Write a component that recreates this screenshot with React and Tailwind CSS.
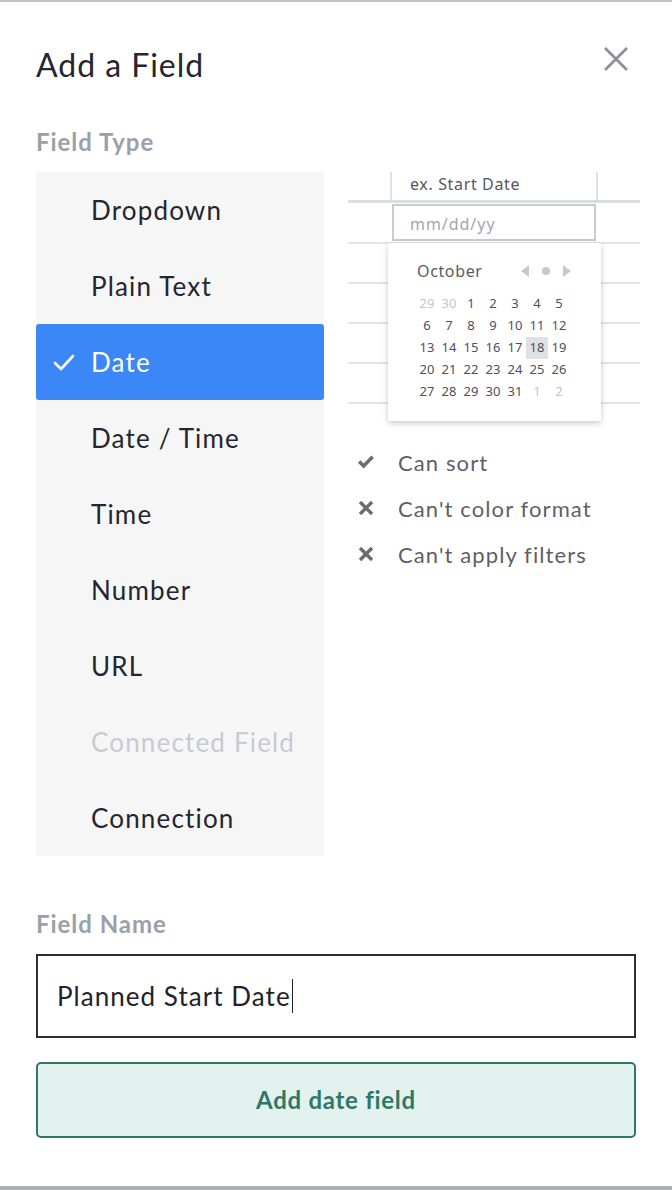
import React from 'react';

const FIELD_TYPES = [
  { label: 'Dropdown' },
  { label: 'Plain Text' },
  { label: 'Date', selected: true },
  { label: 'Date / Time' },
  { label: 'Time' },
  { label: 'Number' },
  { label: 'URL' },
  { label: 'Connected Field', disabled: true },
  { label: 'Connection' },
];

const WEEKS = [
  [29, 30, 1, 2, 3, 4, 5],
  [6, 7, 8, 9, 10, 11, 12],
  [13, 14, 15, 16, 17, 18, 19],
  [20, 21, 22, 23, 24, 25, 26],
  [27, 28, 29, 30, 31, 1, 2],
];

const ABILITIES = [
  { ok: true, text: 'Can sort' },
  { ok: false, text: "Can't color format" },
  { ok: false, text: "Can't apply filters" },
];

function CheckIcon({ className, strokeWidth = '2.6' }) {
  return (
    <svg viewBox="0 0 24 24" className={className} fill="none" stroke="currentColor" strokeWidth={strokeWidth} strokeLinecap="round" strokeLinejoin="round">
      <polyline points="3,13 9,19 21,6" />
    </svg>
  );
}

function HeavyCheck({ className }) {
  return (
    <svg viewBox="0 0 20 20" className={className} fill="currentColor">
      <path d="M1 10.8 L3.8 8.1 L7.4 11.6 L16 2.8 L18.8 5.5 L7.4 17.2 Z" />
    </svg>
  );
}

function CrossIcon({ className }) {
  return (
    <svg viewBox="0 0 24 24" className={className} fill="none" stroke="currentColor" strokeWidth="4.4" strokeLinecap="butt">
      <line x1="4" y1="4" x2="20" y2="20" />
      <line x1="20" y1="4" x2="4" y2="20" />
    </svg>
  );
}

// Little date-picker mock shown beside the type list
function DatePreview() {
  return (
    <div className="relative h-[268px] font-['Noto_Sans',sans-serif]">
      {/* header row */}
      <div className="flex h-[28px]">
        <div className="w-[44px] border-r-2 border-[#e1e2e6]" />
        <div className="w-[206px] border-r-2 border-[#e1e2e6] pl-[18px] text-[16px] leading-[24px] text-[#55565e] tracking-[0.04em]">
          ex. Start Date
        </div>
        <div className="flex-1" />
      </div>
      <div className="h-[3px] bg-[#dcdde2]" />
      <div className="h-[41px] border-b-2 border-[#e3e4e8] pt-[1px]">
        <div className="ml-[44px] w-[204px] h-[37px] border-2 border-[#c9cbd2] pl-[16px] pt-[2px] text-[16px] leading-[33px] text-[#a3a6ae] tracking-[0.06em]">
          mm/dd/yy
        </div>
      </div>
      <div className="h-[40px] border-b-2 border-[#e3e4e8]" />
      <div className="h-[40px] border-b-2 border-[#e3e4e8]" />
      <div className="h-[40px] border-b-2 border-[#e3e4e8]" />
      <div className="h-[40px] border-b-2 border-[#e3e4e8]" />

      {/* calendar popup */}
      <div className="absolute left-[40px] top-[71px] w-[213px] h-[178px] bg-white shadow-[0_2px_6px_rgba(0,0,0,0.22)] pl-[29px] pt-[18px]">
        <div className="flex items-center w-[154px] h-[20px]">
          <span className="text-[16px] text-[#5a5b63] tracking-[0.04em]">October</span>
          <div className="ml-auto flex items-center gap-[13px] text-[#c5c8d0]">
            <svg viewBox="0 0 8 12" className="w-[8px] h-[12px]" fill="currentColor"><polygon points="8,0 8,12 0,6" /></svg>
            <span className="w-[8px] h-[8px] rounded-full bg-[#c5c8d0]" />
            <svg viewBox="0 0 8 12" className="w-[8px] h-[12px]" fill="currentColor"><polygon points="0,0 0,12 8,6" /></svg>
          </div>
        </div>
        <div className="mt-[12px] -ml-[1px] grid grid-cols-[repeat(7,22px)] auto-rows-[22px]">
          {WEEKS.map((week, wi) =>
            week.map((d, di) => {
              const muted = (wi === 0 && d > 20) || (wi === 4 && d < 10);
              const active = wi === 2 && d === 18;
              return (
                <span
                  key={wi + '-' + di}
                  className={
                    'flex items-center justify-center text-[13px] ' +
                    (muted ? 'text-[#c3c6ce] ' : 'text-[#4f5058] ') +
                    (active ? 'bg-[#e0e1e5]' : '')
                  }
                >
                  {d}
                </span>
              );
            })
          )}
        </div>
      </div>
    </div>
  );
}

export default function App() {
  return (
    <div className="w-[672px] h-[1190px] overflow-hidden bg-white border-t-2 border-b-4 border-t-[#c3c4c8] border-b-[#adafb2] px-9 flex flex-col font-['Lato',sans-serif]">
      {/* Header */}
      <div className="flex items-start justify-between pt-[43px]">
        <h1 className="text-[32px] leading-[40px] text-[#25252f] tracking-[0.03em]">Add a Field</h1>
        <button className="mt-[1px] mr-[7px] text-[#8c8f96]">
          <svg viewBox="0 0 26 26" className="w-[26px] h-[26px]" fill="none" stroke="currentColor" strokeWidth="2.6">
            <line x1="2" y1="2" x2="24" y2="24" />
            <line x1="24" y1="2" x2="2" y2="24" />
          </svg>
        </button>
      </div>

      <div className="mt-[43px] text-[24px] leading-[28px] font-bold text-[#9b9fa7] tracking-[0.04em]">Field Type</div>

      <div className="mt-[16px] flex">
        {/* type list */}
        <ul className="w-[288px] shrink-0 bg-[#f6f6f6]">
          {FIELD_TYPES.map((t) => (
            <li
              key={t.label}
              className={
                'relative h-[76px] flex items-center pl-[55px] text-[26px] tracking-[0.045em] ' +
                (t.selected
                  ? 'bg-[#3c87f7] text-white rounded-[3px]'
                  : t.disabled
                  ? 'text-[#c7cbd4]'
                  : 'text-[#25252f]')
              }
            >
              {t.selected && <CheckIcon className="absolute left-[16px] w-[24px] h-[24px]" />}
              {t.label}
            </li>
          ))}
        </ul>

        {/* preview column */}
        <div className="ml-[24px] w-[292px] shrink-0">
          <DatePreview />
          <ul className="mt-[-1px]">
            {ABILITIES.map((a) => (
              <li key={a.text} className="h-[46px] flex items-center text-[22px] text-[#5e5f67] tracking-[0.05em]">
                <span className="w-[50px] pl-[9px] text-[#6a6b73] flex items-center">
                  {a.ok ? <HeavyCheck className="w-[18px] h-[18px]" /> : <CrossIcon className="w-[18px] h-[18px]" />}
                </span>
                {a.text}
              </li>
            ))}
          </ul>
        </div>
      </div>

      <div className="mt-[54px] text-[24px] leading-[28px] font-bold text-[#9b9fa7] tracking-[0.04em]">Field Name</div>

      <div className="mt-[16px] h-[84px] border-2 border-[#2d2d35] flex items-center pl-[19px] text-[26px] text-[#222228] tracking-[0.04em]">
        Planned Start Date
        <span className="ml-[1px] w-[1.5px] h-[34px] bg-[#222]" />
      </div>

      <button className="mt-[24px] h-[76px] rounded-[5px] border-2 border-[#2f7866] bg-[#e3f1ef] text-[24px] font-bold text-[#2f7866] tracking-[0.03em]">
        Add date field
      </button>
    </div>
  );
}
